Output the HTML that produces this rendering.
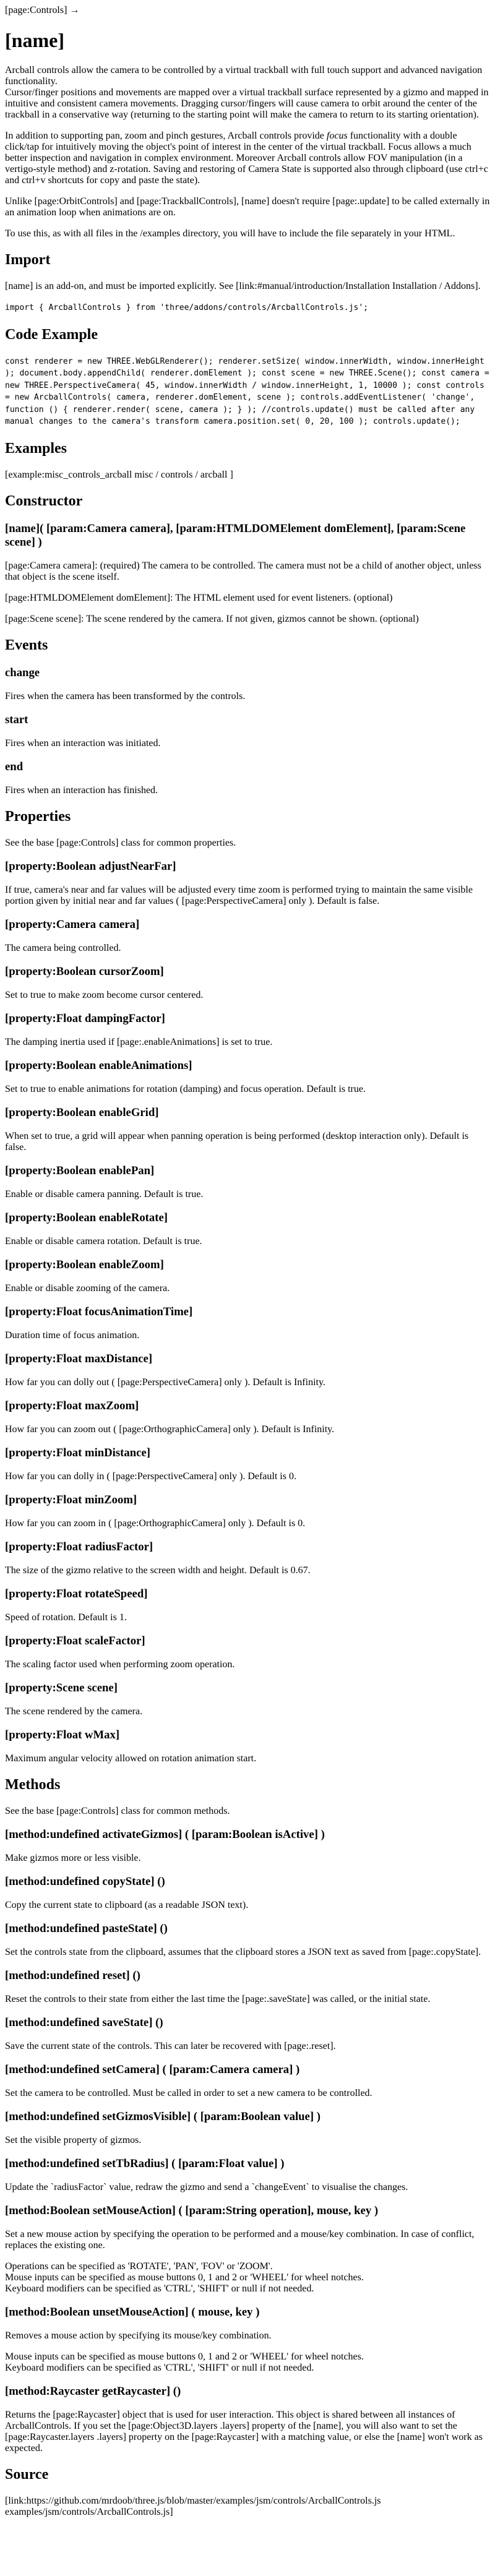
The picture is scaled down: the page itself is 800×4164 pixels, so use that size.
<!DOCTYPE html>
<html>
<head>
<meta charset="utf-8">
<style>
body{margin:8px;font-family:"Liberation Serif",serif;font-size:16px;color:#000;background:#fff;}
code{font-family:"DejaVu Sans Mono",monospace;font-size:13px;line-height:18.5px;}
p.c{line-height:18.5px;}
h1{font-size:2em;margin:21px 0;}
h2{font-size:1.5em;margin:20px 0;}
h3{font-size:1.17em;margin:18px 0;}
p{margin:16px 0;}
</style>
</head>
<body>
<div>[page:Controls] →</div>
<h1>[name]</h1>
<p>Arcball controls allow the camera to be controlled by a virtual trackball with full touch support and advanced navigation functionality.<br>
Cursor/finger positions and movements are mapped over a virtual trackball surface represented by a gizmo and mapped in intuitive and consistent camera movements. Dragging cursor/fingers will cause camera to orbit around the center of the trackball in a conservative way (returning to the starting point will make the camera to return to its starting orientation).</p>
<p>In addition to supporting pan, zoom and pinch gestures, Arcball controls provide <i>focus</i> functionality with a double click/tap for intuitively moving the object's point of interest in the center of the virtual trackball. Focus allows a much better inspection and navigation in complex environment. Moreover Arcball controls allow FOV manipulation (in a vertigo-style method) and z-rotation. Saving and restoring of Camera State is supported also through clipboard (use ctrl+c and ctrl+v shortcuts for copy and paste the state).</p>
<p>Unlike [page:OrbitControls] and [page:TrackballControls], [name] doesn't require [page:.update] to be called externally in an animation loop when animations are on.</p>
<p>To use this, as with all files in the /examples directory, you will have to include the file separately in your HTML.</p>
<h2>Import</h2>
<p>[name] is an add-on, and must be imported explicitly. See [link:#manual/introduction/Installation Installation / Addons].</p>
<p class="c"><code>import { ArcballControls } from 'three/addons/controls/ArcballControls.js';</code></p>
<h2>Code Example</h2>
<p class="c"><code>const renderer = new THREE.WebGLRenderer(); renderer.setSize( window.innerWidth, window.innerHeight ); document.body.appendChild( renderer.domElement ); const scene = new THREE.Scene(); const camera = new THREE.PerspectiveCamera( 45, window.innerWidth / window.innerHeight, 1, 10000 ); const controls = new ArcballControls( camera, renderer.domElement, scene ); controls.addEventListener( 'change', function () { renderer.render( scene, camera ); } ); //controls.update() must be called after any manual changes to the camera's transform camera.position.set( 0, 20, 100 ); controls.update();</code></p>
<h2>Examples</h2>
<p>[example:misc_controls_arcball misc / controls / arcball ]</p>
<h2>Constructor</h2>
<h3>[name]( [param:Camera camera], [param:HTMLDOMElement domElement], [param:Scene scene] )</h3>
<p>[page:Camera camera]: (required) The camera to be controlled. The camera must not be a child of another object, unless that object is the scene itself.</p>
<p>[page:HTMLDOMElement domElement]: The HTML element used for event listeners. (optional)</p>
<p>[page:Scene scene]: The scene rendered by the camera. If not given, gizmos cannot be shown. (optional)</p>
<h2>Events</h2>
<h3>change</h3>
<p>Fires when the camera has been transformed by the controls.</p>
<h3>start</h3>
<p>Fires when an interaction was initiated.</p>
<h3>end</h3>
<p>Fires when an interaction has finished.</p>
<h2>Properties</h2>
<p>See the base [page:Controls] class for common properties.</p>
<h3>[property:Boolean adjustNearFar]</h3>
<p>If true, camera's near and far values will be adjusted every time zoom is performed trying to maintain the same visible portion given by initial near and far values ( [page:PerspectiveCamera] only ). Default is false.</p>
<h3>[property:Camera camera]</h3>
<p>The camera being controlled.</p>
<h3>[property:Boolean cursorZoom]</h3>
<p>Set to true to make zoom become cursor centered.</p>
<h3>[property:Float dampingFactor]</h3>
<p>The damping inertia used if [page:.enableAnimations] is set to true.</p>
<h3>[property:Boolean enableAnimations]</h3>
<p>Set to true to enable animations for rotation (damping) and focus operation. Default is true.</p>
<h3>[property:Boolean enableGrid]</h3>
<p>When set to true, a grid will appear when panning operation is being performed (desktop interaction only). Default is false.</p>
<h3>[property:Boolean enablePan]</h3>
<p>Enable or disable camera panning. Default is true.</p>
<h3>[property:Boolean enableRotate]</h3>
<p>Enable or disable camera rotation. Default is true.</p>
<h3>[property:Boolean enableZoom]</h3>
<p>Enable or disable zooming of the camera.</p>
<h3>[property:Float focusAnimationTime]</h3>
<p>Duration time of focus animation.</p>
<h3>[property:Float maxDistance]</h3>
<p>How far you can dolly out ( [page:PerspectiveCamera] only ). Default is Infinity.</p>
<h3>[property:Float maxZoom]</h3>
<p>How far you can zoom out ( [page:OrthographicCamera] only ). Default is Infinity.</p>
<h3>[property:Float minDistance]</h3>
<p>How far you can dolly in ( [page:PerspectiveCamera] only ). Default is 0.</p>
<h3>[property:Float minZoom]</h3>
<p>How far you can zoom in ( [page:OrthographicCamera] only ). Default is 0.</p>
<h3>[property:Float radiusFactor]</h3>
<p>The size of the gizmo relative to the screen width and height. Default is 0.67.</p>
<h3>[property:Float rotateSpeed]</h3>
<p>Speed of rotation. Default is 1.</p>
<h3>[property:Float scaleFactor]</h3>
<p>The scaling factor used when performing zoom operation.</p>
<h3>[property:Scene scene]</h3>
<p>The scene rendered by the camera.</p>
<h3>[property:Float wMax]</h3>
<p>Maximum angular velocity allowed on rotation animation start.</p>
<h2>Methods</h2>
<p>See the base [page:Controls] class for common methods.</p>
<h3>[method:undefined activateGizmos] ( [param:Boolean isActive] )</h3>
<p>Make gizmos more or less visible.</p>
<h3>[method:undefined copyState] ()</h3>
<p>Copy the current state to clipboard (as a readable JSON text).</p>
<h3>[method:undefined pasteState] ()</h3>
<p>Set the controls state from the clipboard, assumes that the clipboard stores a JSON text as saved from [page:.copyState].</p>
<h3>[method:undefined reset] ()</h3>
<p>Reset the controls to their state from either the last time the [page:.saveState] was called, or the initial state.</p>
<h3>[method:undefined saveState] ()</h3>
<p>Save the current state of the controls. This can later be recovered with [page:.reset].</p>
<h3>[method:undefined setCamera] ( [param:Camera camera] )</h3>
<p>Set the camera to be controlled. Must be called in order to set a new camera to be controlled.</p>
<h3>[method:undefined setGizmosVisible] ( [param:Boolean value] )</h3>
<p>Set the visible property of gizmos.</p>
<h3>[method:undefined setTbRadius] ( [param:Float value] )</h3>
<p>Update the `radiusFactor` value, redraw the gizmo and send a `changeEvent` to visualise the changes.</p>
<h3>[method:Boolean setMouseAction] ( [param:String operation], mouse, key )</h3>
<p>Set a new mouse action by specifying the operation to be performed and a mouse/key combination. In case of conflict, replaces the existing one.</p>
<p>Operations can be specified as 'ROTATE', 'PAN', 'FOV' or 'ZOOM'.<br>
Mouse inputs can be specified as mouse buttons 0, 1 and 2 or 'WHEEL' for wheel notches.<br>
Keyboard modifiers can be specified as 'CTRL', 'SHIFT' or null if not needed.</p>
<h3>[method:Boolean unsetMouseAction] ( mouse, key )</h3>
<p>Removes a mouse action by specifying its mouse/key combination.</p>
<p>Mouse inputs can be specified as mouse buttons 0, 1 and 2 or 'WHEEL' for wheel notches.<br>
Keyboard modifiers can be specified as 'CTRL', 'SHIFT' or null if not needed.</p>
<h3>[method:Raycaster getRaycaster] ()</h3>
<p>Returns the [page:Raycaster] object that is used for user interaction. This object is shared between all instances of ArcballControls. If you set the [page:Object3D.layers .layers] property of the [name], you will also want to set the [page:Raycaster.layers .layers] property on the [page:Raycaster] with a matching value, or else the [name] won't work as expected.</p>
<h2>Source</h2>
<p>[link:https://github.com/mrdoob/three.js/blob/master/examples/jsm/controls/ArcballControls.js examples/jsm/controls/ArcballControls.js]</p>
</body>
</html>
